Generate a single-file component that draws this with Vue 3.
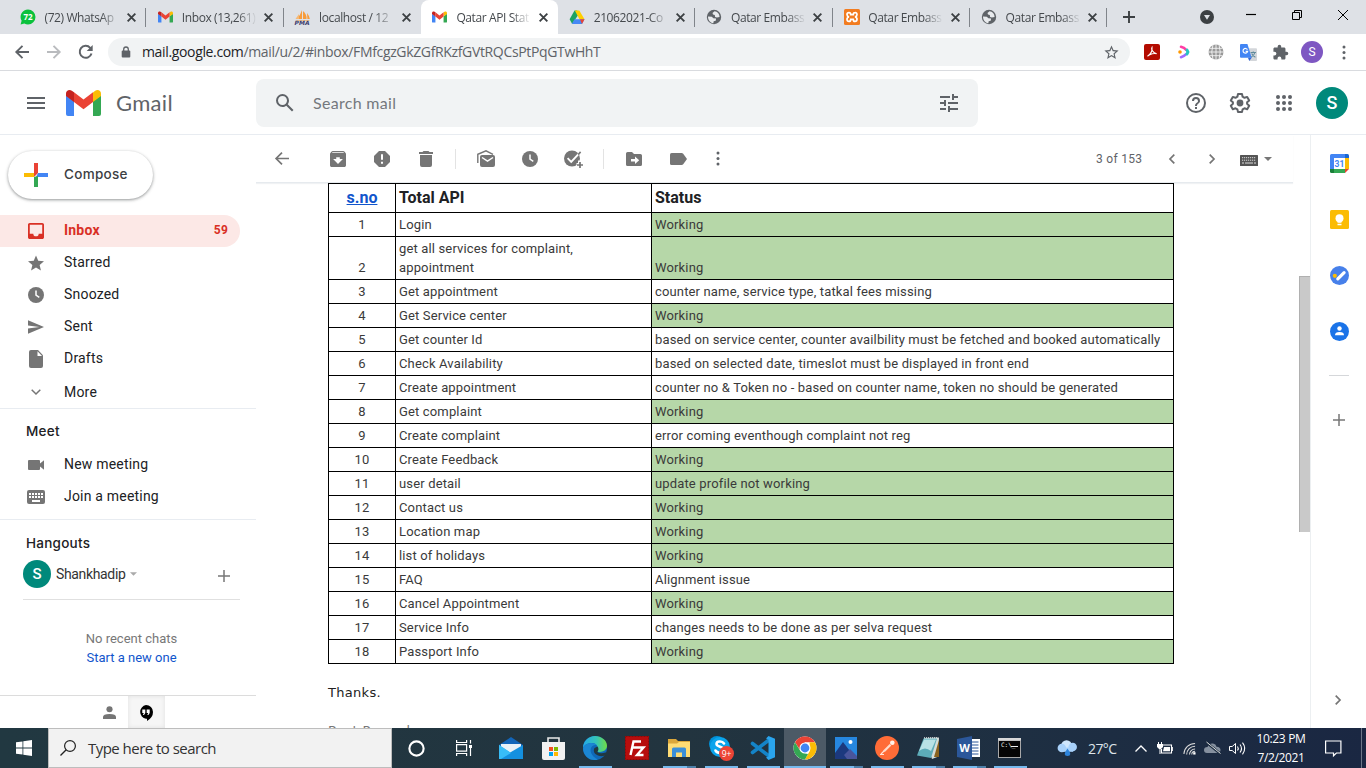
<script setup>
import { h } from 'vue'

const gmailM = '<path fill="#4285f4" d="M0 5.5V24q0 2 2 2h6V11z"/><path fill="#34a853" d="M27 11v15h6q2 0 2-2V5.5z"/><path fill="#fbbc04" d="M27 2.500V12l8-6V3.600C35 .6 31.700-1 29.200.8z"/><path fill="#ea4335" d="M8 12V2.200l9.500 7.200L27 2.200V12l-9.500 7.200z"/><path fill="#c5221f" d="M0 3.600V6l8 6V2.200L5.800.8C3.300-1 0 .6 0 3.600z"/>'
const globe = '<circle cx="8" cy="8" r="7.200" fill="#5f6368"/><path fill="#e8eaed" d="M2 7.500l3.800.2 1.600 1.500 2.700.3-.4 2.200-2 .6-.4 1.900C4 13.700 2 11 2 7.500zM8.500 2.200l-2 1.700.5 1.600 1.800.5.3 1.900 1.800.7 2.700-.5C13.500 4.700 11.500 2.500 8.500 2.200z"/>'

const icons = {
  whatsapp: ['0 0 16 16', '<path fill="#0ac13c" d="M8 .5a7.500 7.500 0 0 1 0 15q-2 0-3.600-.9L.6 15.600l1-3.800A7.500 7.500 0 0 1 8 .5z"/>'],
  gmail: ['0 -1 35 28', gmailM],
  pma: ['0 0 16 16', '<path fill="#f89c3a" d="M7 1v9H1.500Q5.500 6.500 7 1zM8 2q4 3.500 3.500 8H8zM12 4q2.500 3 2.800 6h-2.400z"/><path fill="#f5b976" d="M4 5v5H.5zM1 11.200h14l-1 .8H2z"/>'],
  drive: ['0 0 16 16', '<path fill="#1ea362" d="M5.500 1.500h2.700L10 4.700 3.200 15 .6 10.300z"/><path fill="#ffcf00" d="M5.800 1.500h4.500l5.200 8.800H10.500z"/><path fill="#4688f4" d="M5.500 10.300h10L13 15H2.800z"/><path fill="#ea4335" d="M11 10.300h4.500L13 15z"/>'],
  globe: ['0 0 16 16', globe],
  xampp: ['0 0 16 16', '<rect width="16" height="16" rx="1.500" fill="#f27c20"/><path d="M5 3.600Q3 3.600 3 5.500T5 8Q3 8.200 3 10.300t2 2.100q1.700 0 1.700-2h2.600q0 2 1.700 2 2 0 2-2.100T11 8q2-.5 2-2.500t-2-1.900q-1.700 0-1.700 2H6.700q0-2-1.700-2z" fill="none" stroke="#fff" stroke-width="1.700"/>'],
  x: ['0 0 10 10', '<path d="M1.500 1.500l7 7m0-7l-7 7" stroke="#3c4043" stroke-width="1.700" fill="none"/>'],
  tabplus: ['0 0 12 12', '<path d="M6 0v12M0 6h12" stroke="#3c4043" stroke-width="1.900"/>'],
  circledown: ['0 0 14 14', '<circle cx="7" cy="7" r="7" fill="#3c4043"/><path fill="#dee1e6" d="M4 5h6L7 9.800z"/>'],
  min: ['0 0 10 10', '<path d="M0 4.500h10" stroke="#000" stroke-width="1.200"/>'],
  restore: ['0 0 10 10', '<path d="M.5 2.500h7v7h-7zM2.500 2.500v-2h7v7h-2" fill="none" stroke="#000"/>'],
  close: ['0 0 10 10', '<path d="M0 0l10 10M10 0L0 10" stroke="#000" fill="none"/>'],
  nback: ['0 0 14 14', '<path d="M14 7H1.500M7.500.8L1.300 7l6.200 6.200" fill="none" stroke="#5f6368" stroke-width="1.900"/>'],
  nfwd: ['0 0 14 14', '<path d="M0 7h12.500M6.500.8L12.700 7l-6.200 6.200" fill="none" stroke="#b9bbbe" stroke-width="1.900"/>'],
  reload: ['0 0 14 14', '<path d="M12.500 8.500A6 6 0 1 1 11.200 2.800L12 3.700" fill="none" stroke="#5f6368" stroke-width="2"/><path fill="#5f6368" d="M13.700 0v6H7.700z"/>'],
  lock: ['0 0 10 12', '<path d="M2.700 5V3.300a2.300 2.300 0 0 1 4.600 0V5" fill="none" stroke="#5f6368" stroke-width="1.300"/><rect x=".7" y="4.500" width="8.600" height="7" rx="1" fill="#5f6368"/>'],
  star: ['0 0 24 24', '<path fill="#5f6368" d="M22 9.240l-7.190-.62L12 2 9.190 8.630 2 9.240l5.460 4.730L5.820 21 12 17.270 18.180 21l-1.630-7.030L22 9.240zM12 15.400l-3.760 2.270 1-4.280-3.320-2.880 4.380-.38L12 6.100l1.710 4.040 4.380.38-3.320 2.880 1 4.280L12 15.400z"/>'],
  pdf: ['0 0 16 16', '<rect width="16" height="16" rx="2" fill="#b30b00"/><path d="M8 3.200c-1.400 2 1 5.500 4.700 6.500-2.200-.7-6.400 0-9.200 2.500C6 10.500 8.500 7 8 3.200z" fill="none" stroke="#fff" stroke-width="1.100"/>'],
  play: ['0 0 14 16', '<path d="M4 2.800q3.200.9 5.200 3" stroke="#ff3da5" stroke-width="2.600" fill="none" stroke-linecap="round"/><path d="M4 13.200q3.200-.9 5.200-3" stroke="#a06bff" stroke-width="2.600" fill="none" stroke-linecap="round"/><path d="M10 6l.9 2-.9 2" stroke="#26c6c0" stroke-width="3" fill="none" stroke-linecap="round"/><circle cx="3" cy="8" r="1.800" fill="#ff9800"/>'],
  net: ['0 0 16 16', '<circle cx="8" cy="8" r="7.500" fill="#999"/><path d="M8 0v16M0 8h16M1.500 4.300h13M1.500 11.700h13M5 .5Q2.500 8 5 15.500M11 .5q2.500 7.500 0 15" stroke="#f4f4f4" fill="none" stroke-width=".9"/>'],
  translate: ['0 0 16 16', '<path fill="#d3d6da" d="M6 4h9q1 0 1 1v10q0 1-1 1H9z"/><path d="M10 8h5M12.500 7v1M14 8q-.7 3-3.500 4.500M11 9q1 2.500 3.500 3.500" stroke="#5f8a9b" fill="none"/><path fill="#4285f4" d="M1 0h6l4 13H1q-1 0-1-1V1q0-1 1-1z"/><path fill="#3367d6" d="M7.500 13H11l-2.300 3z"/><path d="M7 5.300A2.200 2.200 0 1 0 7.200 7H5.300" stroke="#fff" fill="none" stroke-width="1.100"/>'],
  puzzle: ['0 0 24 24', '<path fill="#5f6368" d="M20.500 11H19V7c0-1.100-.9-2-2-2h-4V3.500a2.500 2.500 0 0 0-5 0V5H4c-1.100 0-2 .9-2 2v3.800h1.500a2.700 2.700 0 0 1 0 5.400H2V20c0 1.100.9 2 2 2h3.800v-1.500a2.700 2.700 0 0 1 5.400 0V22H17c1.100 0 2-.9 2-2v-4h1.500a2.500 2.500 0 0 0 0-5z"/>'],
  vdots: ['0 0 4 16', '<circle cx="2" cy="2.200" r="1.600" fill="#5f6368"/><circle cx="2" cy="8" r="1.600" fill="#5f6368"/><circle cx="2" cy="13.800" r="1.600" fill="#5f6368"/>'],
  menu: ['0 0 18 12', '<path d="M0 1h18M0 6h18M0 11h18" stroke="#5f6368" stroke-width="2"/>'],
  search: ['0 0 24 24', '<path fill="#5f6368" d="M20.490 19l-5.730-5.730C15.530 12.200 16 10.910 16 9.500A6.500 6.500 0 1 0 9.500 16c1.410 0 2.700-.47 3.770-1.240L19 20.490 20.490 19zM5 9.500C5 7.010 7.010 5 9.500 5S14 7.010 14 9.500 11.990 14 9.500 14 5 11.990 5 9.500z"/>'],
  tune: ['0 0 18 18', '<path fill="#5f6368" d="M0 14v2h6v-2H0zM0 2v2h10V2H0zm10 16v-2h8v-2h-8v-2H8v6h2zM4 6v2H0v2h4v2h2V6H4zm14 4V8H8v2h10zm-6-4h2V4h4V2h-4V0h-2v6z"/>'],
  help: ['2 2 20 20', '<path fill="#5f6368" d="M11 18h2v-2h-2v2zm1-16a10 10 0 1 0 0 20 10 10 0 0 0 0-20zm0 18a8 8 0 1 1 0-16 8 8 0 0 1 0 16zm0-14a4 4 0 0 0-4 4h2a2 2 0 1 1 4 0c0 2-3 1.750-3 5h2c0-2.250 3-2.500 3-5a4 4 0 0 0-4-4z"/>'],
  gear: ['2 2 20 20', '<path fill="none" stroke="#5f6368" stroke-width="2" stroke-linejoin="round" d="M10 3h4l.6 2.700 1.900 1.100 2.700-.9 2 3.500-2.100 1.900v1.500l2.100 1.900-2 3.500-2.700-.9-1.900 1.100L14 21h-4l-.6-2.600-1.900-1.100-2.700.9-2-3.500 2.100-1.900v-1.500L2.800 9.400l2-3.500 2.700.9 1.900-1.100z"/><circle cx="12" cy="12" r="3.400" fill="#5f6368"/>'],
  apps: ['0 0 16 16', [2, 8, 14].map(y => [2, 8, 14].map(x => `<circle cx="${x}" cy="${y}" r="2" fill="#5f6368"/>`).join('')).join('')],
  plus4: ['0 0 24 24', '<path fill="#ea4335" d="M10 0h4v10l-4 4z"/><path fill="#4285f4" d="M14 10h10v4H12z"/><path fill="#34a853" d="M10 14l4-1v11h-4z"/><path fill="#fbbc04" d="M0 10h10v4H0z"/>'],
  inbox: ['3 3 18 18', '<path fill="#d93025" d="M19 3H5c-1.100 0-2 .9-2 2v14c0 1.100.9 2 2 2h14c1.100 0 2-.9 2-2V5c0-1.100-.9-2-2-2zm0 12h-4a3 3 0 0 1-6 0H5V5h14v10z"/>'],
  starred: ['2 2 20 19', '<path fill="#757575" d="M12 17.270L18.180 21l-1.640-7.030L22 9.240l-7.190-.61L12 2 9.190 8.630 2 9.240l5.460 4.730L5.820 21z"/>'],
  clock: ['0 0 16 16', '<circle cx="8" cy="8" r="8" fill="#757575"/><path d="M8 3.600v4.600l3.300 2.100" fill="none" stroke="#fff" stroke-width="1.500"/>'],
  sent: ['2 3 21 18', '<path fill="#757575" d="M2.010 21L23 12 2.010 3 2 10l15 2-15 2z"/>'],
  draft: ['0 0 14 18', '<path fill="#757575" d="M2 0h7l5 5.300V16q0 2-2 2H2q-2 0-2-2V2q0-2 2-2z"/><path fill="#fff" d="M8.500 1.300v4.600H13z"/>'],
  down: ['0 0 10 6', '<path d="M.7.700L5 5l4.300-4.300" fill="none" stroke="#757575" stroke-width="1.500"/>'],
  cam: ['0 0 16 10', '<path fill="#757575" d="M1 0h10q1 0 1 1v2.500L16 .2v9.600l-4-3.300V9q0 1-1 1H1Q0 10 0 9V1q0-1 1-1z"/>'],
  kb: ['0 0 18 14', '<rect width="18" height="14" rx="2" fill="#757575"/><path d="M2 4h14M2 7h14" stroke="#fff" stroke-width="2" stroke-dasharray="2 1"/><path d="M5 11h8" stroke="#fff" stroke-width="2"/>'],
  kb2: ['0 0 18 11', '<rect width="18" height="11" rx=".5" fill="#555"/><path d="M2 2.700h14M2 5.200h14" stroke="#ddd" stroke-width="1" stroke-dasharray="1.200 .8"/><path d="M2 8h2m1 0h8m1 0h2" stroke="#ddd"/>'],
  caret: ['0 0 8 4', '<path fill="#777" d="M0 0h8L4 4z"/>'],
  caretl: ['0 0 8 4', '<path fill="#aaa" d="M0 0h8L4 4z"/>'],
  plus: ['0 0 12 12', '<path d="M6 0v12M0 6h12" stroke="#777" stroke-width="1.500"/>'],
  person: ['0 0 14 14', '<circle cx="7" cy="3.500" r="3.300" fill="#757575"/><path fill="#757575" d="M0 14v-2.200Q0 8.500 7 8.500t7 3.300V14z"/>'],
  hangouts: ['0 0 14 16', '<path d="M7 0a7 7 0 0 1 7 7q0 5.500-6 9v-2.200H7A7 7 0 0 1 7 0z"/><path fill="#fff" d="M3.300 4.500h3V8L5 10H3.900l.9-2H3.300zM7.700 4.500h3V8l-1.300 2H8.300l.9-2H7.700z"/>'],
  back: ['0 0 14 13', '<path d="M14 6.500H1.200M7 .6L1.100 6.500 7 12.400" fill="none" stroke="#757575" stroke-width="1.700"/>'],
  archive: ['3 3 18 18', '<path fill="#757575" fill-rule="evenodd" d="M20.540 5.230l-1.390-1.680C18.880 3.210 18.470 3 18 3H6c-.47 0-.88.210-1.160.55L3.460 5.230C3.170 5.570 3 6.020 3 6.500V19c0 1.100.9 2 2 2h14c1.100 0 2-.9 2-2V6.500c0-.48-.17-.93-.46-1.270zM12 17.500L6.500 12H10v-2h4v2h3.500L12 17.500zM5.120 5.300l.81-1h12l.94 1H5.120z"/>'],
  spam: ['0 0 16 16', '<path fill="#757575" d="M5 0h6l5 5v6l-5 5H5l-5-5V5z"/><path d="M8 3.200v5.600M8 10.800v2" stroke="#fff" stroke-width="2"/>'],
  trash: ['0 0 14 16', '<path fill="#757575" d="M4.500 0h5l1 1H14v2H0V1h3.500zM1 4h12v10q0 2-2 2H3q-2 0-2-2z"/>'],
  unread: ['0 0 18 17', '<path fill="none" stroke="#757575" stroke-width="1.400" d="M.8 13V4.300L9 .8l7 3.500"/><path fill="#757575" d="M5 5h11q2 0 2 2v8q0 2-2 2H5q-2 0-2-2V7q0-2 2-2z"/><path d="M5 7.500l5.500 3.700L16 7.500" fill="none" stroke="#fff" stroke-width="1.500"/>'],
  task: ['0 0 20 18', '<circle cx="8" cy="8.500" r="8" fill="#757575"/><path d="M3.600 8.200l3.600 3.600 7.500-8" fill="none" stroke="#fff" stroke-width="1.900"/><path d="M14.200 4.600l2.400-2.700" stroke="#757575" stroke-width="1.600"/><path d="M16 10.500v7M12.500 15h7" stroke="#fff" stroke-width="4"/><path d="M16 12v6M13 15h6" stroke="#757575" stroke-width="1.700"/>'],
  move: ['0 0 16 14', '<path fill="#757575" d="M1.600 0H6l2 2h6.400Q16 2 16 3.600v8.800q0 1.600-1.600 1.600H1.600Q0 14 0 12.400V1.600Q0 0 1.600 0z"/><path fill="#fff" d="M5 7h4V4.500l4.200 3.700L9 12V9.500H5z"/>'],
  label: ['0 0 17 12', '<path fill="#757575" d="M1.600 0h10q1 0 1.600.7L17 6l-3.800 5.300q-.6.7-1.600.7h-10Q0 12 0 10.400V1.600Q0 0 1.600 0z"/>'],
  left: ['0 0 6 10', '<path d="M5.300.7L1 5l4.300 4.300" fill="none" stroke="#757575" stroke-width="1.700"/>'],
  right: ['0 0 6 10', '<path d="M.7.7L5 5 .7 9.300" fill="none" stroke="#757575" stroke-width="1.700"/>'],
  cal: ['0 0 19 19', '<path fill="#4285f4" d="M1.500 0H15v4H4v11H0V1.500Q0 0 1.500 0z"/><path fill="#1967d2" d="M15 0h2.500Q19 0 19 1.500V4h-4z"/><path fill="#fbbc04" d="M15 4h4v11h-4z"/><path fill="#34a853" d="M4 15h11v4H4z"/><path fill="#188038" d="M0 15h4v4H1.500Q0 19 0 17.500z"/><path fill="#ea4335" d="M15 15h4l-4 4z"/><path fill="#fff" d="M4 4h11v11H4z"/><text x="9.500" y="12.700" font-family="Roboto" font-weight="700" font-size="8.500" text-anchor="middle" fill="#4285f4">31</text>'],
  keep: ['0 0 19 19', '<rect width="19" height="19" rx="1.500" fill="#fbbc04"/><circle cx="9.500" cy="8.300" r="4" fill="#fff"/><path fill="#fff" d="M7.500 10h4v2.800h-4zM7.500 13.700h4v1.500h-4z"/>'],
  tasks: ['0 0 19 19', '<circle cx="9.500" cy="9.500" r="9.500" fill="#4780ea"/><circle cx="4.800" cy="9.800" r="2.100" fill="#fbbc04"/><path d="M7.800 12.900l6.300-6.300" stroke="#fff" stroke-width="3.200" stroke-linecap="round"/>'],
  contacts: ['0 0 19 19', '<circle cx="9.500" cy="9.500" r="9.500" fill="#1a73e8"/><circle cx="9.500" cy="6.500" r="2.200" fill="#fff"/><path fill="#fff" d="M5 13.300q0-3.300 4.500-3.300t4.500 3.300z"/>'],
  win: ['0 0 16 16', '<path fill="#fff" d="M0 2.300l6.500-.9v6.200H0zM7.300 1.300L16 0v7.600H7.300zM0 8.400h6.500v6.200L0 13.700zM7.300 8.400H16V16l-8.700-1.300z"/>'],
  wsearch: ['0 0 16 16', '<circle cx="10" cy="6" r="5.400" fill="none" stroke="#222" stroke-width="1.200"/><path d="M6.200 9.800L.5 15.500" stroke="#222" stroke-width="1.300"/>'],
  cortana: ['0 0 16 16', '<circle cx="8" cy="8" r="6.700" fill="none" stroke="#fff" stroke-width="2"/>'],
  taskview: ['0 0 16 16', '<path d="M.6 0v2.500h10V0M.6 16v-2.500h10V16M.6 4.700h10v6.500H.6zM14.500 0v3.500M14.500 8v8" fill="none" stroke="#fff" stroke-width="1.200"/><path fill="#fff" d="M13 5h3v3h-3z"/>'],
  mail: ['0 0 24 24', '<path fill="#1265b8" d="M0 9l12-8 12 8v4H0z"/><path fill="#e8f1f7" d="M2 8h20v6l-10 5-10-5z"/><path fill="#32b5f2" d="M0 9l12 8-9 6H0z"/><path fill="#1490df" d="M24 9v14H0z"/><path fill="#38bdf7" d="M0 9l12 8L2 23H0z"/>'],
  store: ['0 0 24 24', '<path d="M7 8V2h11v6" fill="none" stroke="#e9e9e9" stroke-width="1.600"/><path fill="#f2f2f2" d="M1 6h23v16q0 2-2 2H3q-2 0-2-2z"/><path fill="#f25022" d="M8 11h4v4H8z"/><path fill="#7fba00" d="M13 11h4v4h-4z"/><path fill="#00a4ef" d="M8 16h4v4H8z"/><path fill="#ffb900" d="M13 16h4v4h-4z"/>'],
  edge: ['0 0 24 24', '<defs><linearGradient id="eg" x1="0" x2="1"><stop offset="0" stop-color="#24a8e8"/><stop offset=".55" stop-color="#35c4b8"/><stop offset="1" stop-color="#70dc45"/></linearGradient></defs><circle cx="12" cy="12" r="12" fill="#0f68b8"/><path fill="url(#eg)" d="M0 12C0 5 5.500 0 12 0s12 4.500 12 9.800C24 14 20 16 17 16c-4 0-2.500-2-2.300-3.500C15 9 12 7 8.500 7 4 7 1 9.500 0 12z"/><path fill="#1b86d3" d="M0 12C2 8 5.500 7 8.500 7c2 0 4 .8 5.200 2C8 8 6 14 9 18.500c2 3.500 6 5 6 5C7 26 0 20 0 12z"/><path fill="#213840" d="M14.500 10.500q2 2.500-.2 5.500 3 2.500 9 .2L24 19q-5 2-9 .5c-4-1.500-5-5-3.500-7.500z"/>'],
  fz: ['0 0 24 24', '<rect width="24" height="24" fill="#b70d0d"/><rect x=".5" y=".5" width="23" height="23" fill="none" stroke="#8a0a0a" stroke-dasharray="2 1"/><path d="M5.500 19L8.500 5.500H16M7 11.500h6.500M12.500 11.500h6L12 19h6.500" fill="none" stroke="#fff" stroke-width="2.400"/>'],
  explorer: ['0 0 24 24', '<path fill="#dba73b" d="M1 3h8l2 2h12v15H1z"/><path fill="#ffdc74" d="M1 7.500h9l2-1.500h11v15H1z"/><path fill="#3b8fd8" d="M5 13q0-1.500 1.500-1.500h11Q19 11.500 19 13v8h-4v-4.500H9V21H5z"/>'],
  skype: ['0 0 26 26', '<circle cx="9" cy="9" r="8" fill="#0090d8"/><circle cx="15" cy="15" r="7" fill="#0090d8"/><circle cx="12" cy="12" r="10" fill="#0aa4ec"/><path d="M16 8.500C14 5.500 8.500 6 8.500 9s7.500 2.500 7.500 6-6.500 4-8.500.5" fill="none" stroke="#fff" stroke-width="2.600" stroke-linecap="round"/><circle cx="18.500" cy="18.500" r="7.500" fill="#ec4436"/><text x="18.500" y="21.600" font-family="Open Sans" font-size="8.500" text-anchor="middle" fill="#fff">9+</text>'],
  vscode: ['0 0 24 24', '<path d="M1.500 7.500L18 20M1.500 16.500L18 4" stroke="#1484c8" stroke-width="3.600" stroke-linecap="round"/><path fill="#2aa5ee" d="M17.500 0L24 2.800v18.400L17.500 24 15 21.500l2.500-1V3.500L15 2.500z"/>'],
  chrome: ['0 0 24 24', '<circle cx="12" cy="12" r="11.500" fill="#fff"/><path fill="#ea4335" d="M2 6.300a11.500 11.500 0 0 1 20 0H12L7 14z"/><path fill="#fbbc04" d="M22 6.300A11.500 11.500 0 0 1 12 23.500L17 14.500 16.500 6.300z"/><path fill="#34a853" d="M2 6.300l5.500 9 4.500 2 3 .8-3 5.400A11.500 11.500 0 0 1 2 6.300z"/><circle cx="12" cy="12" r="5.500" fill="#fff"/><circle cx="12" cy="12" r="4.400" fill="#4285f4"/>'],
  photos: ['0 0 24 24', '<path fill="#2687df" d="M1 1h22v22H1z"/><path fill="#1c397e" d="M1 17L9 6l13 17H1z"/><path fill="#49559b" d="M10 19l6-6 7 7v3H13z"/><circle cx="16.500" cy="6" r="2" fill="#fff"/>'],
  postman: ['0 0 24 24', '<circle cx="12" cy="12" r="12" fill="#ff6c37"/><path d="M5 18.500h4M6 18l3.500-3.500" stroke="#ffe3d6" stroke-width="1.200" fill="none"/><path d="M9 15.300l6.500-6.600" stroke="#ffdccb" stroke-width="2.300"/><circle cx="17.300" cy="6.700" r="2.300" fill="#fff3e9"/>'],
  notepad: ['0 0 24 24', '<path fill="#d5ddd9" d="M8 2l15-.5-.5 19L16 23z"/><path fill="#89621f" d="M18 21l5-17v17z"/><path fill="#5dacb9" d="M7.500 2.500H21L15 22 1 19.500z"/><path fill="#b9e2e6" d="M8 3.500h12L15 15Q9 10 3 15z"/><path d="M8 1.800h14" stroke="#eee" stroke-dasharray="1 1"/>'],
  word: ['0 0 24 24', '<path fill="#fff" d="M12 3h11v18H12z"/><path d="M14.500 6h7m-7 3h7m-7 3h7m-7 3h7m-7 3h7" stroke="#2b579a"/><path fill="#2b579a" d="M0 3l15-3v24L0 21z"/><text x="7.500" y="16.200" font-family="Open Sans" font-weight="700" font-size="11" text-anchor="middle" fill="#fff">W</text>'],
  cmd: ['0 0 24 24', '<path fill="#a8a8a8" d="M0 2h23v20H0z"/><path fill="#050505" d="M1 5h21v16H1z"/><path fill="#d8d8d8" d="M0 2h23v2.500H0z"/><text x="3" y="11" font-family="DejaVu Sans Mono" font-size="6" fill="#eee">C:\\_</text><path d="M13 10.500h7" stroke="#eee"/>'],
  weather: ['0 0 22 18', '<circle cx="10" cy="6" r="5.700" fill="#cfe6fc"/><circle cx="5" cy="8.500" r="4.500" fill="#a8d1fa"/><circle cx="16.500" cy="7.500" r="4.500" fill="#a8d1fa"/><path fill="#a8d1fa" d="M5 8h12v4.500H5z"/><path fill="#2d84dc" d="M11 9q6 8 0 8t0-8z"/>'],
  up: ['0 0 12 7', '<path d="M.5 6.500L6 1l5.500 5.500" fill="none" stroke="#fff" stroke-width="1.300"/>'],
  battery: ['0 0 16 12', '<path d="M6 3h8.500v8H4.500V7M15.300 5v4" fill="none" stroke="#fff" stroke-width="1.100"/><path fill="#fff" d="M7 5h6v4.200H6zM0 2h6v3L4 7H2L0 5zM1 0h1v2H1zM4 0h1v2H4z"/><path d="M3 7v5" stroke="#fff"/>'],
  wifi: ['0 0 14 14', '<path d="M1 13A12 12 0 0 1 13 1.500M4 13.500a9 9 0 0 1 9-9M7 13.500a6 6 0 0 1 6-6M9.500 13.500a3.500 3.500 0 0 1 3.500-3.500" fill="none" stroke="#ddd" stroke-width="1.100"/><path fill="#fff" d="M11 11h2.500v2.500H11z"/>'],
  cloudoff: ['0 0 17 12', '<path fill="#85909f" d="M3 11Q0 11 0 8t3.500-3Q5 1 9 1.500q3 .5 3.500 3.300Q16.500 5 16.500 8T13 11z"/><path d="M2 0l14 11.500" stroke="#1d2e42" stroke-width="2.500"/><path d="M2.500 0l14 11.500" stroke="#ddd"/>'],
  vol: ['0 0 17 13', '<path d="M.5 4.500h2.700l3.300-3v10l-3.300-3H.5z" fill="none" stroke="#fff"/><path d="M8.500 4.500q1.500 2 0 4M11 2.500q3 4 0 8M13.500.7q4.500 5.800 0 11.600" fill="none" stroke="#fff" stroke-width="1.100"/>'],
  note: ['0 0 17 17', '<path d="M.6 1h15.300v12h-4.500L8.500 15.800V13H.6z" fill="none" stroke="#fff" stroke-width="1.200"/>'],
}

const Ico = (p) => h('svg', { class: 'ico', viewBox: icons[p.n][0], width: p.w, height: p.h || p.w, innerHTML: icons[p.n][1] })
Ico.props = ['n', 'w', 'h']

const tabs = [
  { i: 'whatsapp', t: '(72) WhatsAp' }, { i: 'gmail', t: 'Inbox (13,261)' }, { i: 'pma', t: 'localhost / 12' },
  { i: 'gmail', t: 'Qatar API Stat', on: true }, { i: 'drive', t: '21062021-Co' }, { i: 'globe', t: 'Qatar Embass' },
  { i: 'xampp', t: 'Qatar Embass' }, { i: 'globe', t: 'Qatar Embass' },
]
const nav = [
  { i: 'inbox', t: 'Inbox', w: 16, on: true, c: 59 }, { i: 'starred', t: 'Starred', w: 16 }, { i: 'clock', t: 'Snoozed', w: 16 },
  { i: 'sent', t: 'Sent', w: 16 }, { i: 'draft', t: 'Drafts', w: 14, h: 18 }, { i: 'down', t: 'More', w: 10, h: 6 },
]
const W = 'Working'
const rows = [
  ['Login', W, 1], ['get all services for complaint, appointment', W, 1],
  ['Get appointment', 'counter name, service type, tatkal fees missing'], ['Get Service center', W, 1],
  ['Get counter Id', 'based on service center, counter availbility must be fetched and booked automatically'],
  ['Check Availability', 'based on selected date, timeslot must be displayed in front end'],
  ['Create appointment', 'counter no & Token no - based on counter name, token no should be generated'],
  ['Get complaint', W, 1], ['Create complaint', 'error coming eventhough complaint not reg'], ['Create Feedback', W, 1],
  ['user detail', 'update profile not working', 1], ['Contact us', W, 1], ['Location map', W, 1], ['list of holidays', W, 1],
  ['FAQ', 'Alignment issue'], ['Cancel Appointment', W, 1], ['Service Info', 'changes needs to be done as per selva request'],
  ['Passport Info', W, 1],
]
const apps = [
  { i: 'mail' }, { i: 'store' }, { i: 'edge', u: 1 }, { i: 'fz' }, { i: 'explorer', u: 2 }, { i: 'skype', u: 1, w: 26 },
  { i: 'vscode', u: 1 }, { i: 'chrome', u: 3 }, { i: 'photos', u: 2, n: 1 }, { i: 'postman', u: 1, n: 1 },
  { i: 'notepad', u: 2, n: 1 }, { i: 'word', u: 2, n: 1 }, { i: 'cmd', u: 1, n: 1 },
]
</script>

<template>
  <div class="screen">
    <div class="tabs">
      <div v-for="(t, k) in tabs" :key="k" class="tab" :class="{ on: t.on }">
        <span class="fav"><Ico :n="t.i" :w="t.i === 'gmail' ? 15 : 16" :h="t.i === 'gmail' ? 12 : 16" /><b v-if="k === 0" class="cnt">72</b><b v-if="k === 2" class="pma">PMA</b></span>
        <span class="tt">{{ t.t }}</span>
        <Ico class="tx" n="x" w="11" />
      </div>
      <Ico class="newtab" n="tabplus" w="12" />
      <div class="winctl"><Ico n="circledown" w="14" /><Ico n="min" w="10" /><Ico n="restore" w="10" /><Ico n="close" w="10" /></div>
    </div>
    <div class="bar">
      <div class="navc"><Ico n="nback" w="14" /><Ico n="nfwd" w="14" /><Ico n="reload" w="14" /></div>
      <div class="omni"><Ico n="lock" w="10" h="12" /><span class="url"><i>mail.google.com</i>/mail/u/2/#inbox/FMfcgzGkZGfRKzfGVtRQCsPtPqGTwHhT</span><Ico n="star" w="17" /></div>
      <div class="exts"><Ico n="pdf" w="16" /><Ico n="play" w="14" h="16" /><Ico n="net" w="16" /><Ico n="translate" w="17" /><Ico n="puzzle" w="17" /><span class="av purple">S</span><Ico n="vdots" w="4" h="15" /></div>
    </div>
    <header class="top">
      <Ico class="menu" n="menu" w="18" h="12" />
      <Ico n="gmail" w="35" h="28" />
      <span class="brand">Gmail</span>
      <div class="search"><Ico n="search" w="24" /><span>Search mail</span><Ico n="tune" w="18" /></div>
      <div class="tools"><Ico n="help" w="20" /><Ico n="gear" w="20" /><Ico n="apps" w="16" /></div>
      <span class="av big">S</span>
    </header>
    <div class="body">
      <aside class="side">
        <div class="compose"><Ico n="plus4" w="24" /><span>Compose</span></div>
        <nav>
          <div v-for="n in nav" :key="n.t" class="item" :class="{ on: n.on, more: n.i === 'down' }"><span class="ic"><Ico :n="n.i" :w="n.w" :h="n.h" /></span><span>{{ n.t }}</span><em v-if="n.c">{{ n.c }}</em></div>
        </nav>
        <section class="meet">
          <h3>Meet</h3>
          <div class="item"><span class="ic"><Ico n="cam" w="16" h="10" /></span><span>New meeting</span></div>
          <div class="item"><span class="ic"><Ico n="kb" w="18" h="14" /></span><span>Join a meeting</span></div>
        </section>
        <section class="hang">
          <h3>Hangouts</h3>
          <div class="me"><span class="av mid">S</span><span class="nm">Shankhadip</span><Ico n="caretl" w="7" h="4" /><Ico class="add" n="plus" w="12" /></div>
          <div class="chats"><p>No recent chats</p><a>Start a new one</a></div>
        </section>
        <div class="sw"><span><Ico n="person" w="13" /></span><span class="sel"><Ico n="hangouts" w="14" h="16" /></span></div>
      </aside>
      <main class="mainp">
        <div class="tb">
          <span class="c"><Ico n="back" w="14" h="13" /></span><i class="gap"></i>
          <span class="c"><Ico n="archive" w="16" /></span><span class="c"><Ico n="spam" w="16" /></span><span class="c"><Ico n="trash" w="14" h="16" /></span>
          <i class="sep"></i>
          <span class="c"><Ico n="unread" w="18" h="17" /></span><span class="c"><Ico n="clock" w="16" /></span><span class="c"><Ico n="task" w="20" h="18" /></span>
          <i class="sep"></i>
          <span class="c"><Ico n="move" w="16" h="14" /></span><span class="c"><Ico n="label" w="17" h="12" /></span><span class="c s"><Ico n="vdots" w="4" h="15" /></span>
          <span class="count">3 of 153</span>
          <span class="pg"><Ico n="left" w="6" h="10" /><Ico n="right" w="6" h="10" /></span>
          <span class="kbd"><Ico class="k" n="kb2" w="18" h="11" /><Ico n="caret" w="8" h="4" /></span>
        </div>
        <div class="msg">
          <div class="grid">
            <div class="r hd"><div class="a"><u>s.no</u></div><div>Total API</div><div>Status</div></div>
            <div v-for="(r, k) in rows" :key="k" class="r" :class="{ two: k === 1 }"><div class="a">{{ k + 1 }}</div><div><span :class="{ wrap: k === 1 }">{{ r[0] }}</span></div><div :class="{ g: r[2] }">{{ r[1] }}</div></div>
          </div>
          <p class="thx">Thanks.</p>
          <p class="reg">Best Regards,</p>
        </div>
        <div class="scroll"></div>
      </main>
      <aside class="rail">
        <Ico n="cal" w="19" /><Ico n="keep" w="19" /><Ico n="tasks" w="19" /><Ico n="contacts" w="19" />
        <i></i><Ico class="rp" n="plus" w="12" /><Ico class="rc" n="right" w="6" h="10" />
      </aside>
    </div>
    <footer class="task">
      <span class="start"><Ico n="win" w="16" /></span>
      <div class="ws"><Ico n="wsearch" w="16" /><span>Type here to search</span></div>
      <span class="sys"><Ico n="cortana" w="17" /></span><span class="sys tv"><Ico n="taskview" w="16" /></span>
      <span v-for="a in apps" :key="a.i" class="app" :class="['u' + (a.u || 0), { n: a.n }]"><Ico :n="a.i" :w="a.w || 24" /></span>
      <div class="tray">
        <Ico n="weather" w="21" h="17" /><span class="deg">27°C</span><Ico class="t1" n="up" w="12" h="7" /><Ico class="t2" n="battery" w="16" h="12" /><Ico class="t3" n="wifi" w="13" /><Ico class="t4" n="cloudoff" w="17" h="12" /><Ico class="t5" n="vol" w="17" h="13" />
        <span class="clk"><span>10:23 PM</span><span>7/2/2021</span></span>
        <Ico n="note" w="17" /><i></i>
      </div>
    </footer>
  </div>
</template>

<style>
body { margin: 0; overflow: hidden; }
.ico { display: block; flex: none; overflow: visible; }
</style>

<style scoped>
.screen { width: 1366px; height: 768px; overflow: hidden; background: #fff; display: flex; flex-direction: column; font-family: Roboto, sans-serif; color: #202124; }
.screen * { box-sizing: border-box; }
.tabs { height: 34px; flex: none; background: #dee1e6; display: flex; padding-left: 9px; font-family: "Open Sans", sans-serif; font-size: 12px; color: #45494d; }
.tab { width: 137.300px; flex: none; height: 34px; display: flex; align-items: center; padding-left: 11px; position: relative; }
.tab::after { content: ""; position: absolute; right: 0; top: 8px; height: 19px; width: 1px; background: #80848a; }
.tab.on { background: #fff; border-radius: 8px 8px 0 0; }
.tab.on::after, .tab:nth-child(3)::after { display: none; }
.fav { width: 16px; height: 16px; display: flex; align-items: center; justify-content: center; position: relative; }
.cnt { position: absolute; inset: 0; font: 700 8px/16px "Open Sans", sans-serif; color: #fff; text-align: center; }
.pma { position: absolute; bottom: -1px; left: 0; font: italic 700 6px/6px "DejaVu Sans", sans-serif; color: #3c3c6c; }
.tt { margin-left: 8.500px; width: 75px; white-space: nowrap; letter-spacing: -.4px; -webkit-mask-image: linear-gradient(90deg, #000 74%, transparent); mask-image: linear-gradient(90deg, #000 74%, transparent); }
.tx { margin-left: 6.500px; }
.newtab { margin: 11px 0 0 16px; }
.winctl { display: flex; align-items: center; margin-left: auto; padding: 0 18px 5px 0; height: 34px; gap: 36px; }
.winctl > :first-child { margin-right: -4px; position: relative; top: 2px; }
.bar { height: 37px; flex: none; display: flex; align-items: flex-start; padding-top: 4px; border-bottom: 1px solid #d9dbdf; }
.navc { width: 108px; height: 28px; display: flex; gap: 18px; align-items: center; padding-left: 15px; }
.omni { width: 1022px; height: 28px; border-radius: 14px; background: #f1f3f4; display: flex; align-items: center; padding: 0 10px 0 13px; }
.url { font: 14px/20px "Open Sans", sans-serif; color: #5f6368; margin: 0 auto 0 11px; letter-spacing: -.35px; }
.url i { font-style: normal; color: #202124; }
.exts { height: 28px; display: grid; grid-template-columns: repeat(7, 32px); align-items: center; justify-items: center; padding-left: 6px; }
.av { border-radius: 50%; color: #fff; display: flex; align-items: center; justify-content: center; flex: none; background: #00897b; }
.purple { background: #7e57c2; width: 22px; height: 22px; font-size: 12px; }
.top { height: 64px; flex: none; display: flex; align-items: center; border-bottom: 1px solid #e8ecf1; }
.menu { margin: 0 21px 0 27px; }
.brand { font: 22px/28px Lato, sans-serif; color: #5f6368; margin-left: 15px; width: 140px; letter-spacing: .3px; }
.search { width: 722px; height: 48px; border-radius: 8px; background: #f1f3f4; display: flex; align-items: center; padding: 0 20px 0 17px; }
.search span { font: 16px/22px Lato, sans-serif; color: #74787d; margin: 0 auto 0 16px; letter-spacing: .3px; }
.tools { display: flex; align-items: center; gap: 24px; margin-left: 208px; }
.tools > :last-child { margin-left: 2px; }
.big { width: 32px; height: 32px; font-size: 18px; margin-left: 24px; font-weight: 500; }
.body { flex: 1; min-height: 0; display: flex; }
.side { width: 256px; height: 593px; display: flex; flex-direction: column; }
.compose { width: 145px; height: 48px; flex: none; margin: 16px 0 0 8px; border-radius: 24px; box-shadow: 0 1px 3px 1px rgba(60,64,67,.2), 0 1px 2px rgba(60,64,67,.3); display: flex; align-items: center; padding-left: 16px; gap: 16px; font: 500 13.500px/20px Inter, sans-serif; color: #3c4043; letter-spacing: .3px; }
.compose span { padding-bottom: 2px; }
nav { margin-top: 16px; height: 194px; border-bottom: 1px solid #e8ecf1; flex: none; }
.item { height: 32px; width: 240px; display: flex; align-items: center; font-size: 14px; letter-spacing: .2px; border-radius: 0 16px 16px 0; padding-bottom: 2px; }
.more { height: 33px; padding: 0; }
.item .ic { width: 24px; margin: 2px 16px 0 24px; display: flex; justify-content: center; }
.more .ic { margin-top: 0; }
.item.on { background: #fce8e6; color: #d93025; font-weight: 700; }
.item em { margin-left: auto; margin-right: 12px; font-size: 12px; font-style: normal; }
h3 { font: 500 13.500px/20px Inter, sans-serif; margin: 0 0 0 26px; }
.meet { height: 111px; flex: none; padding-top: 12px; border-bottom: 1px solid #e8ecf1; }
.meet h3 { margin-bottom: 8px; letter-spacing: .3px; }
.hang { height: 175px; flex: none; padding-top: 13px; }
.hang h3 { letter-spacing: .25px; }
.me { height: 47px; width: 217px; margin-left: 23px; border-bottom: 1px solid #e0e0e0; display: flex; align-items: center; padding-bottom: 5px; }
.mid { width: 28px; height: 28px; font-size: 15px; font-weight: 500; }
.nm { font-size: 14px; letter-spacing: -.35px; margin: 0 5px 0 5px; color: #333; width: 69px; }
.add { margin: 4px 10px 0 auto; }
.chats { padding: 29px 0 0 7px; text-align: center; font-size: 13px; line-height: 19px; color: #777; }
.chats p { margin: 0; }
.chats a { color: #15c; }
.sw { height: 34px; border-top: 1px solid #dcdcdc; display: flex; padding-left: 91px; }
.sw span { width: 37px; display: flex; align-items: center; justify-content: center; padding: 1px 1px 0 0; }
.sw .sel { background: #f6f6f6; box-shadow: inset 0 0 4px #e0e0e0; }
.mainp { width: 1054px; display: flex; flex-wrap: wrap; align-content: flex-start; height: 593px; overflow: hidden; }
.tb { width: 1037px; height: 48px; border-bottom: 1px solid #e6eaee; box-shadow: 0 1px 1px #f0f2f4; display: flex; align-items: center; padding-left: 4px; }
.c { width: 44px; display: flex; justify-content: center; }
.s { width: 36px; }
.gap { width: 12px; }
.sep { width: 1px; height: 20px; background: #e3e3e3; margin: 0 8px 0 7px; }
.count { margin-left: 360px; font-size: 12px; letter-spacing: .3px; color: #5f6368; width: 73px; white-space: nowrap; }
.pg { display: flex; gap: 34px; }
.kbd { display: flex; align-items: center; gap: 6px; margin-left: 25px; }
.kbd .k { margin-top: 3px; }
.msg { width: 1043px; height: 545px; padding-left: 72px; overflow: hidden; }
.grid { width: 846px; border: solid #000; border-width: 0 1px 1px 0; }
.r { display: grid; grid-template-columns: 67px 256px 522px; height: 24px; }
.r > div { border: solid #000; border-width: 1px 0 0 1px; padding: 0 3px 2px; display: flex; align-items: flex-end; font-size: 13px; line-height: 19px; color: #3a3a3a; white-space: nowrap; letter-spacing: .15px; }
.r > .a { justify-content: center; }
.r > .g { background: #b6d7a8; }
.hd { height: 29px; }
.r.hd > div { font-size: 16px; font-weight: 700; line-height: 22px; padding-bottom: 3px; color: #202124; letter-spacing: 0; }
.r.hd > .a { color: #15c; }
.two { height: 43px; }
.wrap { white-space: normal; width: 190px; }
.thx, .reg { font: 13px/18px "DejaVu Sans", sans-serif; margin: 20px 0 0; color: #222; letter-spacing: .3px; }
.reg { color: #777; }
.scroll { width: 11px; height: 256px; margin-top: 93px; background: #c9c9c9; border: solid #b0b0b0; border-width: 1px 0 0 1px; }
.rail { width: 56px; border-left: 1px solid #eceff1; display: flex; flex-direction: column; align-items: center; padding: 19px 0 0 1px; gap: 37px; height: 593px; }
.rail i { width: 20px; height: 1px; background: #d5d7da; margin-top: -3px; }
.rail .rp { margin-top: 1px; }
.rail .rc { margin: auto 2px 23px 0; }
.task { height: 40px; flex: none; background: linear-gradient(90deg, #213841, #22343f 50%, #1e2f42 75%, #1a2742); display: flex; align-items: center; color: #fff; font-family: "Open Sans", sans-serif; }
.start { width: 48px; padding-left: 16px; }
.ws { width: 344px; height: 40px; background: #f2f2f2; border: 1px solid #bdbdbd; display: flex; align-items: center; padding-left: 11px; gap: 12px; font-size: 15px; letter-spacing: -.53px; color: #333; }
.sys { width: 48px; display: flex; justify-content: center; }
.tv { width: 50px; padding-right: 2px; }
.app { width: 42px; height: 40px; display: flex; align-items: center; justify-content: center; position: relative; }
.app.n { width: 41px; }
.u3 { background: #4c5a66; }
.u1::after, .u2::after, .u3::after { content: ""; position: absolute; left: 5px; bottom: 0; width: 33px; height: 2px; background: #76b9ed; }
.n::after { left: 4px; }
.u2::after { background: linear-gradient(90deg, #76b9ed 24px, #4d7fa8 24px); }
.u3::after { left: 0; width: 42px; }
.app.n { padding-right: 1px; }
.tray { flex: 1; display: flex; align-items: center; padding-left: 26px; }
.deg { font-size: 14px; margin: 0 0 0 10px; width: 47px; letter-spacing: -.6px; color: #dfe5ea; }
.t2 { margin-left: 10px; }
.t3 { margin-left: 10px; }
.t4 { margin-left: 8px; }
.t5 { margin-left: 8px; }
.clk { width: 58px; margin: 0 15px 0 6px; display: flex; flex-direction: column; align-items: center; font-size: 12px; line-height: 19px; letter-spacing: -.35px; white-space: nowrap; }
.tray i { width: 1px; height: 40px; background: #6b7788; margin-left: auto; margin-right: 4px; }
</style>
